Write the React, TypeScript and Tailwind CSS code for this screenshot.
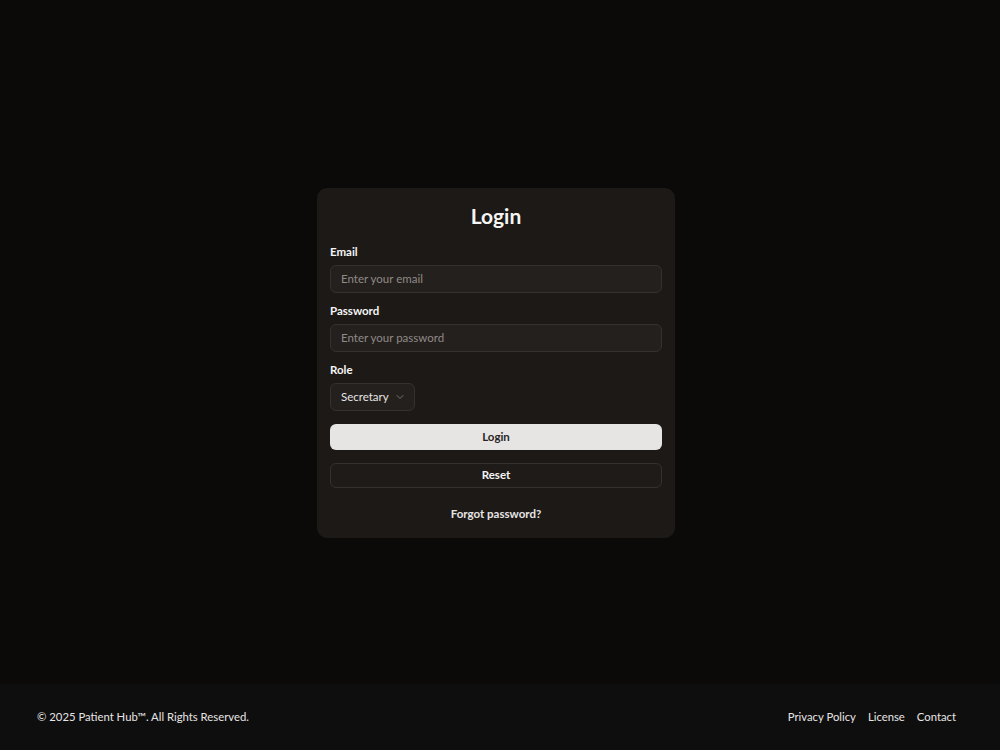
import { ChevronDown } from 'lucide-react'

export default function App() {
  return (
    <div className="min-h-screen flex flex-col bg-[#0c0a09] text-[#f5f5f4] font-['Lato',sans-serif]">
      {/* Main */}
      <main className="flex-1 flex items-center justify-center pt-[41px] pr-[8px]">
        <div className="w-[358px] rounded-[10px] bg-[#1c1917] px-[13px] pt-[14px] pb-[16px]">
          <h1 className="text-center text-[21px] font-bold leading-[28px] mb-[14px]">Login</h1>

          <div className="flex flex-col">
            <label className="text-[11.5px] font-bold leading-[16px] mb-[5px]">Email</label>
            <input
              placeholder="Enter your email"
              className="h-[28px] rounded-[6px] border border-[#35312e] bg-[#24201e] px-[10px] text-[11.5px] placeholder:text-[#8f8a86] outline-none"
            />
          </div>

          <div className="flex flex-col mt-[10px]">
            <label className="text-[11.5px] font-bold leading-[16px] mb-[5px]">Password</label>
            <input
              type="password"
              placeholder="Enter your password"
              className="h-[28px] rounded-[6px] border border-[#35312e] bg-[#24201e] px-[10px] text-[11.5px] placeholder:text-[#8f8a86] outline-none"
            />
          </div>

          <div className="flex flex-col mt-[10px]">
            <label className="text-[11.5px] font-bold leading-[16px] mb-[5px]">Role</label>
            <button className="h-[28px] w-[85px] flex items-center gap-[5px] rounded-[6px] border border-[#35312e] bg-[#24201e] pl-[10px] text-[11.5px] text-[#e7e5e4]">
              Secretary
              <ChevronDown size={12} className="text-[#78716c]" />
            </button>
          </div>

          <button className="mt-[13px] w-full h-[26px] rounded-[6px] bg-[#e7e5e4] text-[#292524] text-[11.5px] font-bold">
            Login
          </button>
          <button className="mt-[13px] w-full h-[25px] rounded-[6px] border border-[#35312e] bg-[#1f1b19] text-[11.5px] font-bold">
            Reset
          </button>

          <div className="mt-[18px] text-center text-[11.5px] font-bold leading-[16px] text-[#e7e5e4]">Forgot password?</div>
        </div>
      </main>

      {/* Footer */}
      <footer className="h-[66px] bg-[#0f0e0f] flex items-center justify-between pl-[37px] pr-[44px] text-[11.3px] text-[#e7e5e4]">
        <span>© 2025 Patient Hub™. All Rights Reserved.</span>
        <nav className="flex gap-[12px]">
          <a>Privacy Policy</a>
          <a>License</a>
          <a>Contact</a>
        </nav>
      </footer>
    </div>
  )
}
